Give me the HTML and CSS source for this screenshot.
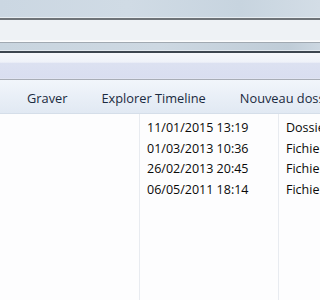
FILE: index.html
```html
<!DOCTYPE html>
<html lang="fr">
<head>
<meta charset="utf-8">
<link rel="stylesheet" href="styles.css">
</head>
<body>
<div class="win">
  <div class="titlebar"></div>
  <div class="frame-line"></div>
  <div class="address"></div>
  <div class="nav-band"></div>
  <div class="menu-band"></div>
  <div class="toolbar">
    <span class="tb-item tb-graver">Graver</span>
    <span class="tb-item tb-timeline">Explorer Timeline</span>
    <span class="tb-item tb-new">Nouveau dossier</span>
  </div>
  <div class="content">
    <div class="col col-name"></div>
    <div class="col col-date">
      <div class="row">11/01/2015 13:19</div>
      <div class="row">01/03/2013 10:36</div>
      <div class="row">26/02/2013 20:45</div>
      <div class="row">06/05/2011 18:14</div>
    </div>
    <div class="col col-type">
      <div class="row">Dossier de fichiers</div>
      <div class="row">Fichier</div>
      <div class="row">Fichier</div>
      <div class="row">Fichier</div>
    </div>
  </div>
</div>
</body>
</html>
```
FILE: styles.css
```css
html, body {
  margin: 0;
  padding: 0;
}
body {
  width: 320px;
  height: 300px;
  overflow: hidden;
  background: #fdfdfe;
  font-family: "Open Sans", "Noto Sans", "Liberation Sans", sans-serif;
}
.win {
  display: flex;
  flex-direction: column;
  height: 300px;
}
.titlebar {
  height: 17px;
  background: linear-gradient(90deg, #cbd7e2 0%, #d0dbe5 40%, #c7d4df 75%, #d3dde6 100%);
  border-bottom: 1px solid #e6ecf1;
}
.frame-line {
  height: 2px;
  background: #6e7378;
}
.address {
  height: 21px;
  background: #eef2f5;
  border-bottom: 1px solid #fbfcfd;
  box-shadow: inset 0 -1px 0 #f5f7f9;
}
.nav-band {
  height: 7px;
  border-top: 1px solid #a1a9b1;
  border-bottom: 1px solid #e2e8ee;
  background: linear-gradient(90deg, #c9d5df 0%, #cdd8e2 50%, #bfccd7 90%, #ccd7e1 100%);
}
.menu-band {
  height: 26px;
  border-top: 2px solid #3e4650;
  border-bottom: 1px solid #a8adb6;
  background: linear-gradient(180deg, #f7f8fc 0%, #eff2f9 35%, #dce1f1 40%, #d9def0 95%, #e4e7f3 100%);
}
.toolbar {
  height: 34px;
  display: flex;
  align-items: center;
  padding-left: 27px;
  padding-top: 3px;
  box-sizing: border-box;
  gap: 34px;
  white-space: nowrap;
  overflow: hidden;
  background: linear-gradient(180deg, #f2f6fb 0%, #e9eff7 50%, #e1e9f3 100%);
  border-bottom: 1px solid #d5dee9;
  font-size: 12.8px;
  color: #1a2a40;
}
.content {
  flex: 1;
  display: flex;
  background: #fdfdfe;
  font-size: 12.5px;
  color: #0a0a0a;
}
.col {
  padding-top: 4px;
}
.col-name {
  width: 139px;
  border-right: 1px solid #e8ebf0;
}
.col-date {
  width: 131px;
  padding-left: 7px;
  border-right: 1px solid #e8ebf0;
}
.col-type {
  flex: 1;
  padding-left: 7px;
  white-space: nowrap;
  overflow: hidden;
}
.row {
  height: 20.7px;
  line-height: 20.7px;
  white-space: nowrap;
}
```
